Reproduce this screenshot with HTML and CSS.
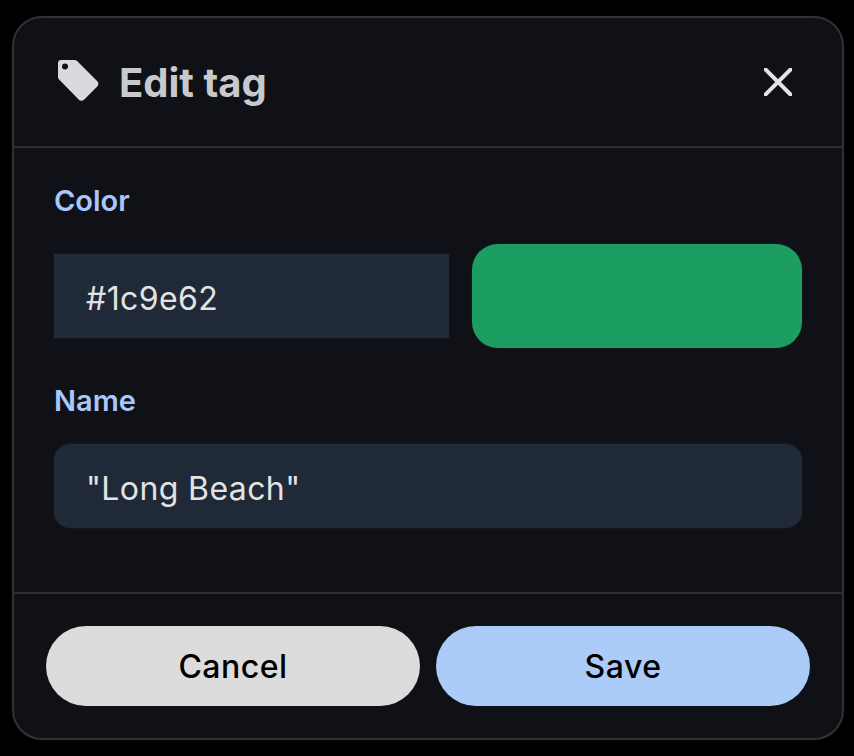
FILE: index.html
```html
<!DOCTYPE html>
<html lang="en">
<head>
<meta charset="utf-8">
<title>Edit tag</title>
<link rel="stylesheet" href="styles.css">
</head>
<body>
<div class="dialog">
  <header class="header">
    <div class="title">
      <svg class="tag-icon" viewBox="0 0 42 42" aria-hidden="true">
        <path fill-rule="evenodd" d="M4 1h13.500c1 0 1.900.4 2.600 1.100L40.300 22.300c1.500 1.500 1.500 3.600 0 5.100L27 40.700c-1.500 1.500-3.600 1.500-5.100 0L2.100 20.600C1.400 19.900 1 19 1 18V4c0-1.700 1.300-3 3-3zM8 4.500a3 3 0 1 0 0 6 3 3 0 0 0 0-6z"/>
      </svg>
      <h1 class="heading">Edit tag</h1>
    </div>
    <svg class="close-icon" viewBox="0 0 28 28" aria-hidden="true">
      <path d="M1.500 1.500 26.500 26.500M26.500 1.500 1.500 26.500"/>
    </svg>
  </header>
  <main class="body">
    <label class="label">Color</label>
    <div class="color-row">
      <div class="field field-hex">#1c9e62</div>
      <div class="swatch"></div>
    </div>
    <label class="label label-name">Name</label>
    <div class="field field-name">"Long Beach"</div>
  </main>
  <footer class="footer">
    <button class="btn btn-cancel">Cancel</button>
    <button class="btn btn-save">Save</button>
  </footer>
</div>
</body>
</html>
```
FILE: styles.css
```css
* { box-sizing: border-box; }
html, body { margin: 0; height: 100%; }
body {
  background: #000;
  font-family: "Inter", "Roboto", "Liberation Sans", sans-serif;
  padding: 16px 10px 16px 12px;
}
.dialog {
  width: 832px;
  height: 724px;
  background: #0f1117;
  border: 2px solid #303236;
  border-radius: 30px;
  display: flex;
  flex-direction: column;
}
.header {
  height: 130px;
  flex: none;
  border-bottom: 2px solid #2c2e32;
  display: flex;
  align-items: center;
  justify-content: space-between;
  padding: 0 50px 0 43px;
}
.title { display: flex; align-items: center; gap: 20px; }
.tag-icon { width: 42px; height: 42px; fill: #d9dadb; margin-top: -4px; }
.heading {
  margin: 2px 0 0;
  font-size: 40px;
  line-height: 48px;
  font-weight: 700;
  color: #c8c9cc;
  letter-spacing: 0;
}
.close-icon { width: 28px; height: 28px; fill: none; stroke: #e3e3e3; stroke-width: 4; stroke-linecap: square; margin-top: -1px; }
.body {
  flex: 1;
  padding: 36px 40px 0 40px;
  display: flex;
  flex-direction: column;
}
.label {
  font-size: 29px;
  line-height: 34px;
  font-weight: 600;
  color: #a8c7fa;
}
.color-row {
  display: flex;
  align-items: center;
  gap: 23px;
  margin-top: 26px;
  height: 104px;
}
.field {
  background: #1f2937;
  color: #e3e3e3;
  font-size: 32px;
  font-weight: 400;
  letter-spacing: 0.4px;
  height: 84px;
  display: flex;
  align-items: center;
  padding: 4px 32px 0;
  box-shadow: 0 0 0 1px #15171c;
}
.field-hex { width: 395px; }
.swatch {
  width: 330px;
  height: 104px;
  background: #1c9e62;
  border-radius: 26px;
  box-shadow: 0 0 0 1px #15171c;
}
.label-name { margin-top: 36px; }
.field-name { margin-top: 26px; width: 748px; border-radius: 16px; }
.footer {
  height: 146px;
  flex: none;
  border-top: 2px solid #2c2e32;
  display: flex;
  gap: 16px;
  padding: 32px 32px 0;
}
.btn {
  flex: none;
  width: 374px;
  height: 80px;
  border: 0;
  border-radius: 40px;
  font-family: inherit;
  font-size: 32px;
  font-weight: 500;
  letter-spacing: 0.5px;
  color: #000;
}
.btn-cancel { background: #dcdcdc; }
.btn-save { background: #abcbf9; }
```
